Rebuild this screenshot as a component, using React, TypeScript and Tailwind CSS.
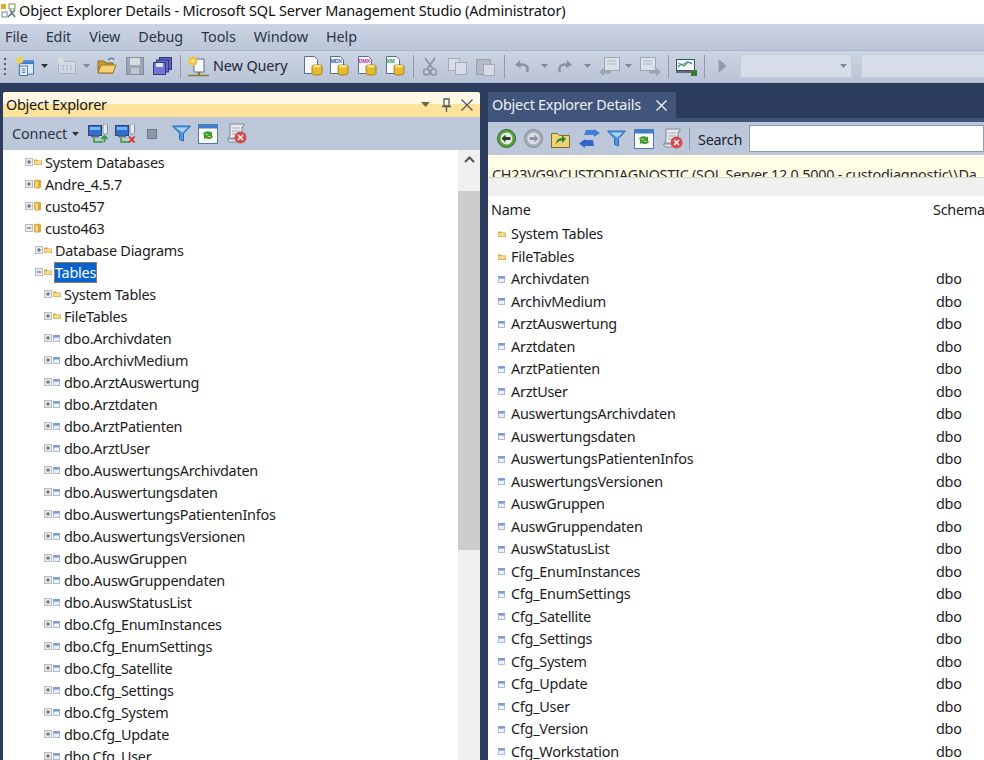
const treeItems: { label: string; level: number; open?: boolean; icon: "folder" | "db" | "table"; selected?: boolean }[] = [
  { label: "System Databases", level: 0, icon: "folder" },
  { label: "Andre_4.5.7", level: 0, icon: "db" },
  { label: "custo457", level: 0, icon: "db" },
  { label: "custo463", level: 0, open: true, icon: "db" },
  { label: "Database Diagrams", level: 1, icon: "folder" },
  { label: "Tables", level: 1, open: true, icon: "folder", selected: true },
  { label: "System Tables", level: 2, icon: "folder" },
  { label: "FileTables", level: 2, icon: "folder" },
  ...[
    "Archivdaten", "ArchivMedium", "ArztAuswertung", "Arztdaten", "ArztPatienten", "ArztUser",
    "AuswertungsArchivdaten", "Auswertungsdaten", "AuswertungsPatientenInfos", "AuswertungsVersionen",
    "AuswGruppen", "AuswGruppendaten", "AuswStatusList", "Cfg_EnumInstances", "Cfg_EnumSettings",
    "Cfg_Satellite", "Cfg_Settings", "Cfg_System", "Cfg_Update", "Cfg_User",
  ].map((t) => ({ label: "dbo." + t, level: 2, icon: "table" as const })),
];

const detailRows = [
  "Archivdaten", "ArchivMedium", "ArztAuswertung", "Arztdaten", "ArztPatienten", "ArztUser",
  "AuswertungsArchivdaten", "Auswertungsdaten", "AuswertungsPatientenInfos", "AuswertungsVersionen",
  "AuswGruppen", "AuswGruppendaten", "AuswStatusList", "Cfg_EnumInstances", "Cfg_EnumSettings",
  "Cfg_Satellite", "Cfg_Settings", "Cfg_System", "Cfg_Update", "Cfg_User", "Cfg_Version", "Cfg_Workstation",
];

function FolderIcon() {
  return (
    <svg width="8" height="6" viewBox="0 0 8 6" className="shrink-0">
      <path d="M0 .5h3l1 1h4V6H0z" fill="#cfa648" />
      <path d="M.6 2h6.800v3.400H.6z" fill="#f6d98a" />
    </svg>
  );
}

function DbIcon() {
  return (
    <svg width="7" height="10" viewBox="0 0 7 10" className="shrink-0">
      <path d="M0 1.500C0 .5 7 .5 7 1.500v7c0 1.400-7 1.400-7 0z" fill="#d9ac39" />
      <path d="M1.500 2.600h2.400v5.600H1.500z" fill="#f7e08f" />
    </svg>
  );
}

function TableIcon() {
  return (
    <svg width="7" height="7" viewBox="0 0 7 7" className="shrink-0">
      <rect width="7" height="7" fill="#a9bbe0" />
      <rect width="7" height="2" fill="#7f9cd8" />
      <rect x="1" y="3" width="5" height="3" fill="#eef1f8" />
    </svg>
  );
}

function ExpandBox({ open }: { open?: boolean }) {
  return (
    <svg width="8" height="8" viewBox="0 0 8 8" className="shrink-0">
      <rect x=".5" y=".5" width="7" height="7" fill="#ececec" stroke="#bdbdbd" />
      <path d="M2 4h4" stroke="#4a5a78" />
      {!open && <path d="M4 2v4" stroke="#4a5a78" />}
    </svg>
  );
}

function Caret({ muted }: { muted?: boolean }) {
  return (
    <svg width="7" height="4" viewBox="0 0 7 4" className="shrink-0">
      <path d="M0 0h7L3.500 4z" fill={muted ? "#7f8898" : "#2b3242"} />
    </svg>
  );
}

function Sep() {
  return <div className="h-[23px] w-px shrink-0 bg-[#8f9bb0]" />;
}

function Filter() {
  return (
    <svg width="19" height="17" viewBox="0 0 19 17" className="shrink-0">
      <path d="M.5 1h18l-7 7.500V16l-4-1.500v-6z" fill="#4d94e0" stroke="#2c6cb8" />
      <path d="M3.500 2.500h12l-5 5z" fill="#a9d3f7" />
    </svg>
  );
}

function RefreshWin() {
  return (
    <svg width="20" height="20" viewBox="0 0 20 20" className="shrink-0">
      <rect x=".5" y=".5" width="19" height="19" fill="#fdfdf6" stroke="#4a78b8" />
      <rect x="1" y="1" width="18" height="3.500" fill="#3f7cc9" />
      <path d="M5 10c1-3 6-3.500 8-1.500l1-1.500v5h-5l1.700-1.600c-1-1-3.500-1-4 .6z" fill="#3e9c2e" />
      <path d="M15 12.500c-1 3-6 3.500-8 1.500l-1 1.500v-5h5l-1.700 1.600c1 1 3.500 1 4-.6z" fill="#3e9c2e" />
    </svg>
  );
}

function ScriptStop() {
  return (
    <svg width="21" height="21" viewBox="0 0 21 21" className="shrink-0">
      <path d="M4 1h14v2l-2 1v11H2l2-2z" fill="#e6e9ef" stroke="#7f8896" />
      <path d="M6 5h8M6 8h8M6 11h5" stroke="#a5adba" />
      <path d="M1 16h11v3H3z" fill="#e6e9ef" stroke="#7f8896" />
      <circle cx="14.500" cy="14.500" r="6" fill="#d8494f" />
      <path d="M12 12l5 5M17 12l-5 5" stroke="#fff" strokeWidth="1.400" />
    </svg>
  );
}

function ServerNet({ kind }: { kind: "add" | "remove" }) {
  return (
    <svg width="21" height="20" viewBox="0 0 21 20" className="shrink-0">
      <rect x=".5" y="1.500" width="13" height="10" fill="#2f6fd0" stroke="#31446e" />
      <rect x="2" y="3" width="10" height="3" fill="#77b4f2" />
      <rect x="15" y="0" width="4.500" height="10" rx="1.500" fill="#e8eaf0" stroke="#8690a3" />
      <rect x="3" y="11.500" width="8" height="2" fill="#5f6c86" />
      <path d="M6 14v4h9" stroke="#2f9a37" strokeWidth="1.500" fill="none" />
      {kind === "add" ? (
        <path d="M16.500 18v-6m-3 3l3-3 3 3" stroke="#2f9a37" strokeWidth="1.800" fill="none" />
      ) : (
        <path d="M14 12.500l5.500 6m0-6l-5.500 6" stroke="#d42a20" strokeWidth="1.800" />
      )}
    </svg>
  );
}

function DocDb({ tag, color }: { tag: string; color: string }) {
  return (
    <svg width="20" height="20" viewBox="0 0 20 20" className="shrink-0">
      <path d="M1.500 .5h10l3 3v14h-13z" fill="#f8f9fb" stroke="#5f6c86" />
      {tag && (
        <text x="1.500" y="6.500" fontSize="5.500" fontWeight="700" fill={color} fontFamily="Liberation Sans, sans-serif">
          {tag}
        </text>
      )}
      <path d="M9 10c0-1.500 10-1.500 10 0v7.500c0 2-10 2-10 0z" fill="#e5b92d" stroke="#8b6d12" strokeWidth=".7" />
      <ellipse cx="14" cy="10.300" rx="4" ry="1.200" fill="#f8e488" />
    </svg>
  );
}

function TopToolbar() {
  return (
    <div className="flex h-[33px] shrink-0 items-center border-y border-[#a8b4c9] bg-gradient-to-b from-[#cbd4e2] to-[#b9c4d6] pb-px">
      <div className="ml-[4px] flex w-[3px] shrink-0 flex-col gap-[3px]">
        {[0, 1, 2, 3].map((i) => (
          <div key={i} className="h-[2px] w-[2px] bg-[#4e5a70]" />
        ))}
      </div>
      {/* new project */}
      <svg width="20" height="21" viewBox="0 0 21 21" className="ml-[8px] shrink-0">
        <rect x="4.500" y="4.500" width="15" height="14" fill="#dfeaf7" stroke="#3f6eaf" />
        <rect x="5" y="5" width="14" height="3" fill="#3f7fcd" />
        <rect x="5" y="10" width="8" height="10" fill="#fff" stroke="#3f6eaf" />
        <path d="M7 13h4M7 15h4M7 17h4" stroke="#3f6eaf" />
        <circle cx="5" cy="4" r="3.500" fill="#f4cf57" />
      </svg>
      <div className="ml-[6px]"><Caret /></div>
      <svg width="20" height="18" viewBox="0 0 20 18" className="ml-[9px] shrink-0 opacity-60">
        <rect x="1.500" y="4.500" width="17" height="12" fill="#dde1e8" stroke="#9aa2b0" />
        <path d="M5 9h2M9 9h2M13 9h2M5 12h2M9 12h2M13 12h2" stroke="#8a92a0" />
        <circle cx="4" cy="4" r="3" fill="#e6e7e2" />
      </svg>
      <div className="ml-[6px]"><Caret muted /></div>
      {/* open */}
      <svg width="20" height="18" viewBox="0 0 20 18" className="ml-[7px] shrink-0">
        <path d="M1 4h6l2 2h7v10H1z" fill="#c89a37" stroke="#8b6a1e" />
        <path d="M1 16l3-8h15l-3 8z" fill="#f4d27a" stroke="#9c7724" />
        <path d="M11 3c2-2.500 5-2.500 6 0" stroke="#5f84b8" strokeWidth="1.500" fill="none" />
      </svg>
      {/* save */}
      <svg width="18" height="18" viewBox="0 0 18 18" className="ml-[9px] shrink-0 opacity-70">
        <rect x=".5" y=".5" width="17" height="17" fill="#8d95a3" stroke="#6c7482" />
        <rect x="4" y="1" width="10" height="7" fill="#dfe2e8" />
        <rect x="5" y="11" width="8" height="6" fill="#c3c8d1" />
      </svg>
      {/* save all */}
      <svg width="19" height="18" viewBox="0 0 19 18" className="ml-[9px] shrink-0">
        <rect x="6.500" y=".5" width="12" height="12" fill="#5a63b8" stroke="#33397c" />
        <rect x="3.500" y="3" width="12" height="12" fill="#6069c2" stroke="#33397c" />
        <rect x=".5" y="5.500" width="12" height="12" fill="#6f78d4" stroke="#33397c" />
        <rect x="3" y="6" width="7" height="4" fill="#dfe2f5" />
      </svg>
      <div className="ml-[8px]"><Sep /></div>
      {/* new query */}
      <svg width="21" height="21" viewBox="0 0 21 21" className="ml-[7px] shrink-0">
        <path d="M6 3h10v13H6z" fill="#f8f9fb" stroke="#5f6c86" />
        <circle cx="5" cy="5" r="4.500" fill="#f2c23e" />
        <circle cx="5" cy="5" r="1.800" fill="#fbe9a0" />
        <path d="M0 19.500h21" stroke="#8c7a2c" strokeWidth="1.500" />
        <path d="M11 16v3" stroke="#8c7a2c" strokeWidth="2" />
      </svg>
      <span className="ml-[4px] w-[75px] shrink-0 whitespace-nowrap pt-px leading-none tracking-[-0.1px] text-[#202a3a]">New Query</span>
      <div className="ml-[15px]"><DocDb tag="" color="" /></div>
      <div className="ml-[6px]"><DocDb tag="MDX" color="#2b62c9" /></div>
      <div className="ml-[8px]"><DocDb tag="DMX" color="#c02ab5" /></div>
      <div className="ml-[8px]"><DocDb tag="XM" color="#2f9a4a" /></div>
      <div className="ml-[8px]"><Sep /></div>
      {/* cut */}
      <svg width="14" height="19" viewBox="0 0 14 19" className="ml-[9px] shrink-0 opacity-70">
        <path d="M2 1l8 11M12 1L4 12" stroke="#767e8c" strokeWidth="1.800" />
        <circle cx="3.500" cy="15" r="3" fill="none" stroke="#767e8c" strokeWidth="1.500" />
        <circle cx="10.500" cy="15" r="3" fill="none" stroke="#767e8c" strokeWidth="1.500" />
      </svg>
      {/* copy */}
      <svg width="19" height="17" viewBox="0 0 19 17" className="ml-[11px] shrink-0 opacity-60">
        <rect x=".5" y=".5" width="11" height="12" fill="#e5e7ec" stroke="#8f96a4" />
        <rect x="7.500" y="4.500" width="11" height="12" fill="#e5e7ec" stroke="#8f96a4" />
      </svg>
      <svg width="19" height="19" viewBox="0 0 19 19" className="ml-[9px] shrink-0 opacity-60">
        <rect x=".5" y="2.500" width="14" height="15" fill="#a9aeb8" stroke="#7e8592" />
        <rect x="7.500" y="7.500" width="11" height="11" fill="#e5e7ec" stroke="#8f96a4" />
      </svg>
      <div className="ml-[9px]"><Sep /></div>
      {/* undo, redo */}
      <svg width="15" height="15" viewBox="0 0 15 15" className="ml-[9px] shrink-0">
        <path d="M13 13c2-5-1-9-8-7" stroke="#8a93a3" strokeWidth="2.500" fill="none" />
        <path d="M6 1L1 6l6 3z" fill="#8a93a3" />
      </svg>
      <div className="ml-[12px]"><Caret muted /></div>
      <svg width="15" height="15" viewBox="0 0 15 15" className="ml-[10px] shrink-0">
        <path d="M2 13C0 8 3 4 10 6" stroke="#8a93a3" strokeWidth="2.500" fill="none" />
        <path d="M9 1l5 5-6 3z" fill="#8a93a3" />
      </svg>
      <div className="ml-[11px]"><Caret muted /></div>
      <svg width="21" height="19" viewBox="0 0 21 19" className="ml-[8px] shrink-0 opacity-70">
        <rect x="5.500" y=".5" width="15" height="13" fill="#e8eaef" stroke="#8f96a4" />
        <path d="M8 4h9M8 7h9" stroke="#a1a8b5" />
        <path d="M0 15l5-4v2.500h7v3H5V19z" fill="#8a93a3" />
      </svg>
      <div className="ml-[5px]"><Caret muted /></div>
      <svg width="21" height="19" viewBox="0 0 21 19" className="ml-[8px] shrink-0 opacity-70">
        <rect x=".5" y=".5" width="15" height="13" fill="#e8eaef" stroke="#8f96a4" />
        <path d="M3 4h9M3 7h9" stroke="#a1a8b5" />
        <path d="M21 15l-5-4v2.500H9v3h7V19z" fill="#8a93a3" />
      </svg>
      <div className="ml-[7px]"><Sep /></div>
      {/* chart */}
      <svg width="21" height="19" viewBox="0 0 21 19" className="ml-[7px] shrink-0">
        <rect x=".5" y="2.500" width="18" height="11" fill="#f2f5fa" stroke="#3f4c64" />
        <path d="M2 10l3-3 3 2 4-4 4 2" stroke="#3d9a3c" strokeWidth="1.200" fill="none" />
        <path d="M2 6l4 2 5-3 5 1" stroke="#4e87d8" fill="none" />
        <path d="M0 15h17" stroke="#3f4c64" strokeWidth="1.500" />
        <rect x="15" y="13" width="6" height="6" fill="#3d7a2e" />
      </svg>
      <div className="ml-[7px]"><Sep /></div>
      <svg width="9" height="14" viewBox="0 0 9 14" className="ml-[13px] shrink-0">
        <path d="M.5 0L8.500 7 .5 14z" fill="#8f9aae" />
      </svg>
      <div className="ml-[13px] flex h-[24px] w-[112px] shrink-0 items-center justify-end rounded-[2px] border border-[#c4ccda] bg-[#d6dde9] pr-[4px]">
        <Caret muted />
      </div>
      <div className="ml-[9px] h-[24px] flex-1 rounded-l-[2px] border border-r-0 border-[#c4ccda] bg-[#d6dde9]" />
    </div>
  );
}

function TreeRow({ item }: { item: (typeof treeItems)[number] }) {
  const indent = item.level === 0 ? "pl-[22px]" : item.level === 1 ? "pl-[32px]" : "pl-[41px]";
  return (
    <div className={`flex h-[22px] items-center ${indent}`}>
      <ExpandBox open={item.open} />
      <div className="ml-[1px] flex w-[10px] shrink-0">
        {item.icon === "folder" && <FolderIcon />}
        {item.icon === "db" && <DbIcon />}
        {item.icon === "table" && <TableIcon />}
      </div>
      <span
        className={
          item.selected
            ? "whitespace-nowrap border border-[#8a7c64] bg-[#0a64cf] text-white"
            : "whitespace-nowrap px-px"
        }
      >
        {item.label}
      </span>
    </div>
  );
}

function ObjectExplorer() {
  return (
    <div className="flex h-full w-[477px] shrink-0 flex-col overflow-hidden rounded-t-[2px]">
      <div className="flex h-[25px] shrink-0 items-center bg-gradient-to-b from-[#fff8e4] from-50% to-[#ffe39c] to-50% pl-[3px] pr-[7px]">
        <span className="flex-1 pt-px leading-none text-[#14161c]">Object Explorer</span>
        <svg width="9" height="5" viewBox="0 0 9 5" className="shrink-0">
          <path d="M0 0h9L4.500 5z" fill="#6b6550" />
        </svg>
        <svg width="11" height="14" viewBox="0 0 11 14" className="ml-[11px] shrink-0">
          <path d="M3 1h5v7H3zM1 8.500h9M5.500 9v5" stroke="#50596a" strokeWidth="1.300" fill="none" />
        </svg>
        <svg width="12" height="12" viewBox="0 0 12 12" className="ml-[9px] shrink-0">
          <path d="M.5.500l11 11m0-11l-11 11" stroke="#50596a" strokeWidth="1.300" />
        </svg>
      </div>
      <div className="flex h-[33px] shrink-0 items-center bg-[#bcc7d9] pl-[9px]">
        <span className="w-[56px] shrink-0 pt-px leading-none tracking-[-0.1px] text-[#2a3446]">Connect</span>
        <div className="ml-[4px]"><Caret /></div>
        <div className="ml-[9px]"><ServerNet kind="add" /></div>
        <div className="ml-[6px]"><ServerNet kind="remove" /></div>
        <div className="ml-[11px] h-[10px] w-[10px] shrink-0 border border-[#6f7889] bg-[#8f97a6]" />
        <div className="ml-[15px]"><Filter /></div>
        <div className="ml-[7px]"><RefreshWin /></div>
        <div className="ml-[8px]"><ScriptStop /></div>
      </div>
      <div className="flex min-h-0 flex-1 bg-white">
        <div className="min-w-0 flex-1 overflow-hidden pt-px leading-[19px] text-[#1c1c1c]">
          {treeItems.map((item) => (
            <TreeRow key={item.label} item={item} />
          ))}
        </div>
        <div className="flex w-[22px] shrink-0 flex-col bg-[#f0f0f0]">
          <div className="flex h-[41px] shrink-0 justify-center pt-[6px]">
            <svg width="11" height="7" viewBox="0 0 11 7">
              <path d="M1 6l4.500-4.500L10 6" stroke="#555" strokeWidth="2" fill="none" />
            </svg>
          </div>
          <div className="h-[359px] shrink-0 bg-[#cdcdcd]" />
        </div>
      </div>
    </div>
  );
}

function DetailRow({ icon, label, schema }: { icon: "folder" | "table"; label: string; schema?: string }) {
  return (
    <div className="flex h-[22.5px] items-center pl-[10px]">
      <div className="flex w-[13px] shrink-0">
        {icon === "folder" ? <FolderIcon /> : <TableIcon />}
      </div>
      <span className="w-[425px] shrink-0 whitespace-nowrap">{label}</span>
      {schema && <span>{schema}</span>}
    </div>
  );
}

function DetailsPane() {
  return (
    <div className="flex h-full min-w-0 flex-1 flex-col">
      <div className="flex h-[26px] shrink-0">
        <div className="flex w-[188px] items-center rounded-t-[2px] bg-[#41557a] pl-[4px] leading-none text-[#eef1f6]">
          <span className="flex-1 whitespace-nowrap pt-px">Object Explorer Details</span>
          <svg width="11" height="11" viewBox="0 0 11 11" className="mr-[9px] shrink-0">
            <path d="M.5.500l10 10m0-10l-10 10" stroke="#eef1f6" strokeWidth="1.400" />
          </svg>
        </div>
      </div>
      <div className="flex h-[37px] shrink-0 items-center border-t-[4px] border-[#41557a] bg-[#bcc7d9] pl-[9px]">
        <svg width="19" height="19" viewBox="0 0 19 19" className="shrink-0">
          <circle cx="9.500" cy="9.500" r="9" fill="#53a63f" stroke="#3a5a35" />
          <circle cx="9.500" cy="9.500" r="6" fill="#e6efe2" />
          <path d="M4.500 9.500l4-4v2.500h5v3h-5v2.500z" fill="#2c3b2e" />
        </svg>
        <svg width="19" height="19" viewBox="0 0 19 19" className="ml-[8px] shrink-0">
          <circle cx="9.500" cy="9.500" r="9" fill="#a7adb8" stroke="#858c99" />
          <circle cx="9.500" cy="9.500" r="6" fill="#d9dde4" />
          <path d="M14.500 9.500l-4-4v2.500h-5v3h5v2.500z" fill="#8f96a3" />
        </svg>
        <svg width="19" height="18" viewBox="0 0 19 18" className="ml-[8px] shrink-0">
          <path d="M.5 3.500h6l2 2h10v12H.5z" fill="#efd07a" stroke="#7f6a28" />
          <path d="M5 14c0-4 3-6 6-6V5l4 4-4 4v-2.500c-2 0-4 1-6 3.500z" fill="#2e8c2a" />
        </svg>
        <svg width="21" height="19" viewBox="0 0 21 19" className="ml-[9px] shrink-0">
          <path d="M7 1h8V0l6 4-6 4V6H5z" fill="#3d7fdb" />
          <path d="M14 11H6v-1l-6 4.500L6 19v-2h9z" fill="#2e67c4" />
        </svg>
        <div className="ml-[7px]"><Filter /></div>
        <div className="ml-[8px]"><RefreshWin /></div>
        <div className="ml-[8px]"><ScriptStop /></div>
        <div className="ml-[6px] h-[22px] w-px shrink-0 bg-[#8f9bb0]" />
        <span className="ml-[8px] w-[46px] shrink-0 pt-[3px] leading-none text-[#1c2230]">Search</span>
        <div className="ml-[5px] h-[27px] flex-1 border border-[#8f9bb0] bg-white" />
      </div>
      <div className="h-[23px] shrink-0 overflow-hidden border-b border-[#d8d8c8] bg-[#fffde6] pl-[4px] pt-[10px]">
        <div className="whitespace-nowrap leading-[20px] text-[#2a2a2a]">
          CH23VG9\CUSTODIAGNOSTIC (SQL Server 12.0.5000 - custodiagnostic\\Da
        </div>
      </div>
      <div className="h-[18px] shrink-0 bg-[#f0f0f0]" />
      <div className="min-h-0 flex-1 overflow-hidden bg-white leading-[20px] text-[#1c1c1c]">
        <div className="flex h-[27px] items-center pl-[3px] pt-[1px]">
          <span className="w-[442px] shrink-0">Name</span>
          <span>Schema</span>
        </div>
        <DetailRow icon="folder" label="System Tables" />
        <DetailRow icon="folder" label="FileTables" />
        {detailRows.map((name) => (
          <DetailRow key={name} icon="table" label={name} schema="dbo" />
        ))}
      </div>
    </div>
  );
}

export default function App() {
  return (
    <div className="flex h-[760px] w-[984px] flex-col overflow-hidden bg-[#2b3c5c] font-['Noto_Sans','Open_Sans',sans-serif] text-[14.4px] tracking-[-0.24px]">
      <div className="flex h-[24px] shrink-0 items-center bg-white pb-[3px]">
        <svg width="16" height="16" viewBox="0 0 16 16" className="ml-px shrink-0">
          <rect x="0" y="1" width="5" height="5" fill="#e2a72e" />
          <rect x="8" y="1" width="6" height="5" fill="none" stroke="#6f9a4d" />
          <rect x="1" y="9" width="5" height="5" fill="none" stroke="#6f86a8" />
          <path d="M7 14l7-7M9 7l5 7" stroke="#6b7280" strokeWidth="1.600" />
        </svg>
        <span className="ml-[2px] whitespace-nowrap text-[14.5px] leading-none tracking-[-0.16px] text-[#111]">
          Object Explorer Details - Microsoft SQL Server Management Studio (Administrator)
        </span>
      </div>
      <div className="flex h-[26px] shrink-0 items-center gap-[18px] bg-gradient-to-b from-[#ccd5e3] to-[#bac5d7] pl-[5px] pt-px leading-none tracking-[-0.08px] text-[#2a3446]">
        {["File", "Edit", "View", "Debug", "Tools", "Window", "Help"].map((m) => (
          <span key={m}>{m}</span>
        ))}
      </div>
      <TopToolbar />
      <div className="flex min-h-0 flex-1 pl-[3px] pt-[9px]">
        <ObjectExplorer />
        <div className="w-[8px] shrink-0" />
        <DetailsPane />
      </div>
    </div>
  );
}
